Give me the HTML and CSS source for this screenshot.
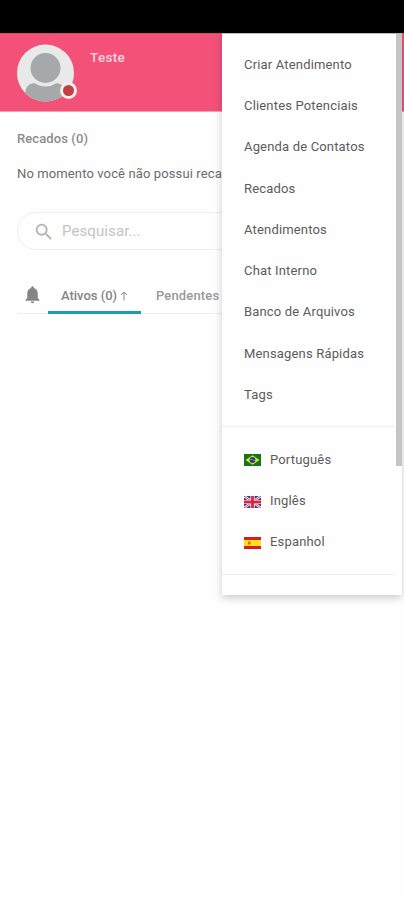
FILE: index.html
```html
<!DOCTYPE html>
<html lang="pt-BR">
<head>
<meta charset="utf-8">
<meta name="viewport" content="width=device-width">
<title>Atendimentos</title>
<link rel="stylesheet" href="styles.css">
</head>
<body>
<div class="status-bar"></div>
<header class="header">
  <div class="avatar">
    <svg viewBox="0 0 58 58" width="58" height="58">
      <defs><clipPath id="face"><circle cx="28.500" cy="29" r="28.5"/></clipPath></defs>
      <circle cx="28.500" cy="29" r="28.5" fill="#e8eaea"/>
      <g clip-path="url(#face)" fill="#a5a9aa"><circle cx="28.500" cy="24" r="15"/><path d="M8 58V49Q9 40 17 39Q28.500 46 40 39Q49 41 50 49V58Z"/></g>
    </svg>
    <span class="presence"></span>
  </div>
  <div class="user">Teste</div>
</header>
<main class="content">
  <h2 class="title">Recados (0)</h2>
  <p class="message">No momento você não possui recados</p>
  <div class="search">
    <svg viewBox="0 0 24 24" width="22" height="22" fill="#b3b3b3"><path d="M15.500 14h-.79l-.28-.27A6.470 6.470 0 0 0 16 9.500 6.500 6.500 0 1 0 9.500 16c1.610 0 3.090-.59 4.230-1.570l.27.28v.79l5 4.990L20.490 19l-4.990-5zm-6 0C7.010 14 5 11.990 5 9.500S7.010 5 9.500 5 14 7.010 14 9.500 11.990 14 9.500 14z"/></svg>
    <span>Pesquisar...</span>
  </div>
  <nav class="tabs">
    <div class="bell"><svg viewBox="0 0 24 24" width="21" height="21" fill="#858585"><path d="M12 22c1.100 0 2-.9 2-2h-4c0 1.100.89 2 2 2zm6-6v-5c0-3.070-1.640-5.640-4.500-6.320V4c0-.83-.67-1.500-1.500-1.500s-1.500.67-1.500 1.500v.68C7.630 5.360 6 7.920 6 11v5l-2 2v1h16v-1l-2-2z"/></svg></div>
    <div class="tab active"><span>Ativos (0)</span><svg viewBox="0 0 8 10" width="8" height="10" fill="none" stroke="#888"><path d="M4 9.500V1M1 4L4 1L7 4"/></svg></div>
    <div class="tab pending"><span>Pendentes</span></div>
  </nav>
</main>
<aside class="menu">
  <ul class="group">
    <li><span>Criar Atendimento</span></li>
    <li><span>Clientes Potenciais</span></li>
    <li><span>Agenda de Contatos</span></li>
    <li><span>Recados</span></li>
    <li><span>Atendimentos</span></li>
    <li><span>Chat Interno</span></li>
    <li><span>Banco de Arquivos</span></li>
    <li><span>Mensagens Rápidas</span></li>
    <li><span>Tags</span></li>
  </ul>
  <ul class="group languages">
    <li><svg class="flag" viewBox="0 0 17 12"><path fill="#137519" d="M0 0h17v12H0z"/><path fill="#d9e52c" d="M8.500 1.200L15.500 6L8.500 10.800L1.500 6Z"/><circle cx="8.500" cy="6" r="2.900" fill="#233b8c"/><path d="M6 5.300Q9 5 11 7" fill="none" stroke="#b9cce0" stroke-width=".5"/></svg><span>Português</span></li>
    <li><svg class="flag" viewBox="0 0 17 12"><path fill="#303b91" d="M0 0h17v12H0z"/><path d="M0 0L17 12M17 0L0 12" stroke="#fff" stroke-width="2.400"/><path d="M0 0L17 12M17 0L0 12" stroke="#d92d42" stroke-width=".9"/><path d="M8.500 0V12M0 6H17" stroke="#fff" stroke-width="4.200"/><path d="M8.500 0V12M0 6H17" stroke="#d9263d" stroke-width="2.800"/></svg><span>Inglês</span></li>
    <li><svg class="flag" viewBox="0 0 17 12"><path fill="#d91d1d" d="M0 0h17v12H0z"/><path fill="#ffe01b" d="M0 3h17v6H0z"/><path fill="#c6742b" d="M4 4.500h2.500v3H4z"/></svg><span>Espanhol</span></li>
  </ul>
  <div class="scrollbar"></div>
</aside>
</body>
</html>
```
FILE: styles.css
```css
* { box-sizing: border-box; }
body { margin: 0; height: 900px; overflow: hidden; background: #fefefe; font-family: Roboto, sans-serif; color: #606060; }
svg { display: block; flex: none; }
.status-bar { height: 33px; background: #000; }
.header { height: 79px; padding: 10px 17px; display: flex; gap: 15px; background: #f45179; border-top: 1px solid #d64a6b; border-bottom: 1px solid #f7a0b5; }
.avatar { position: relative; width: 58px; height: 58px; }
.presence { position: absolute; left: 43px; top: 38px; width: 17px; height: 17px; border-radius: 50%; background: #c33f44; border: 3px solid #f1eeee; }
.user { padding-top: 4px; font-size: 13.5px; line-height: 18px; font-weight: 500; letter-spacing: .3px; color: #fbd5de; }
.content { padding: 17px 17px 0; white-space: nowrap; }
.title { margin: 0; font-size: 13px; line-height: 20px; font-weight: 500; letter-spacing: .1px; color: #8c8c8c; }
.message { margin: 15px 0 0; font-size: 13px; line-height: 20px; letter-spacing: .12px; color: #6c6c6c; }
.search { margin-top: 28px; width: 370px; height: 38px; display: flex; align-items: center; gap: 7px; padding: 0 0 1px 15px; border: 1px solid #eee; border-radius: 19px; font-size: 15px; letter-spacing: .1px; color: #c4c4c4; }
.search svg { margin-top: 2px; }
.tabs { display: flex; height: 37px; margin-top: 27px; border-bottom: 1px solid #eee; font-size: 13px; font-weight: 500; color: #999; }
.bell { width: 31px; padding: 7px 0 0 5px; }
.tab { height: 37px; display: flex; align-items: center; }
.active { width: 93px; justify-content: center; gap: 3px; border-bottom: 3px solid #1b9eae; color: #858585; padding-top: 3px; }
.pending { padding-left: 15px; letter-spacing: .15px; }
.menu { position: absolute; left: 222px; top: 33px; width: 180px; height: 562px; padding-top: 9.5px; background: #fefefe; border-top: 1px solid #bbb; box-shadow: 0 3px 8px rgba(0,0,0,.2); }
.group { list-style: none; margin: 0 8px 0 0; padding: 0 0 11px 22px; border-bottom: 1px solid #eee; }
.group li { display: flex; align-items: center; height: 41.3px; font-size: 13px; letter-spacing: .17px; color: #5c5c5c; white-space: nowrap; }
.languages { padding-top: 11.5px; }
.flag { width: 17px; height: 12px; margin: 2px 9px 0 0; }
.scrollbar { position: absolute; right: 0; top: 0; width: 6px; height: 432px; background: #c5c5c5; }
```
